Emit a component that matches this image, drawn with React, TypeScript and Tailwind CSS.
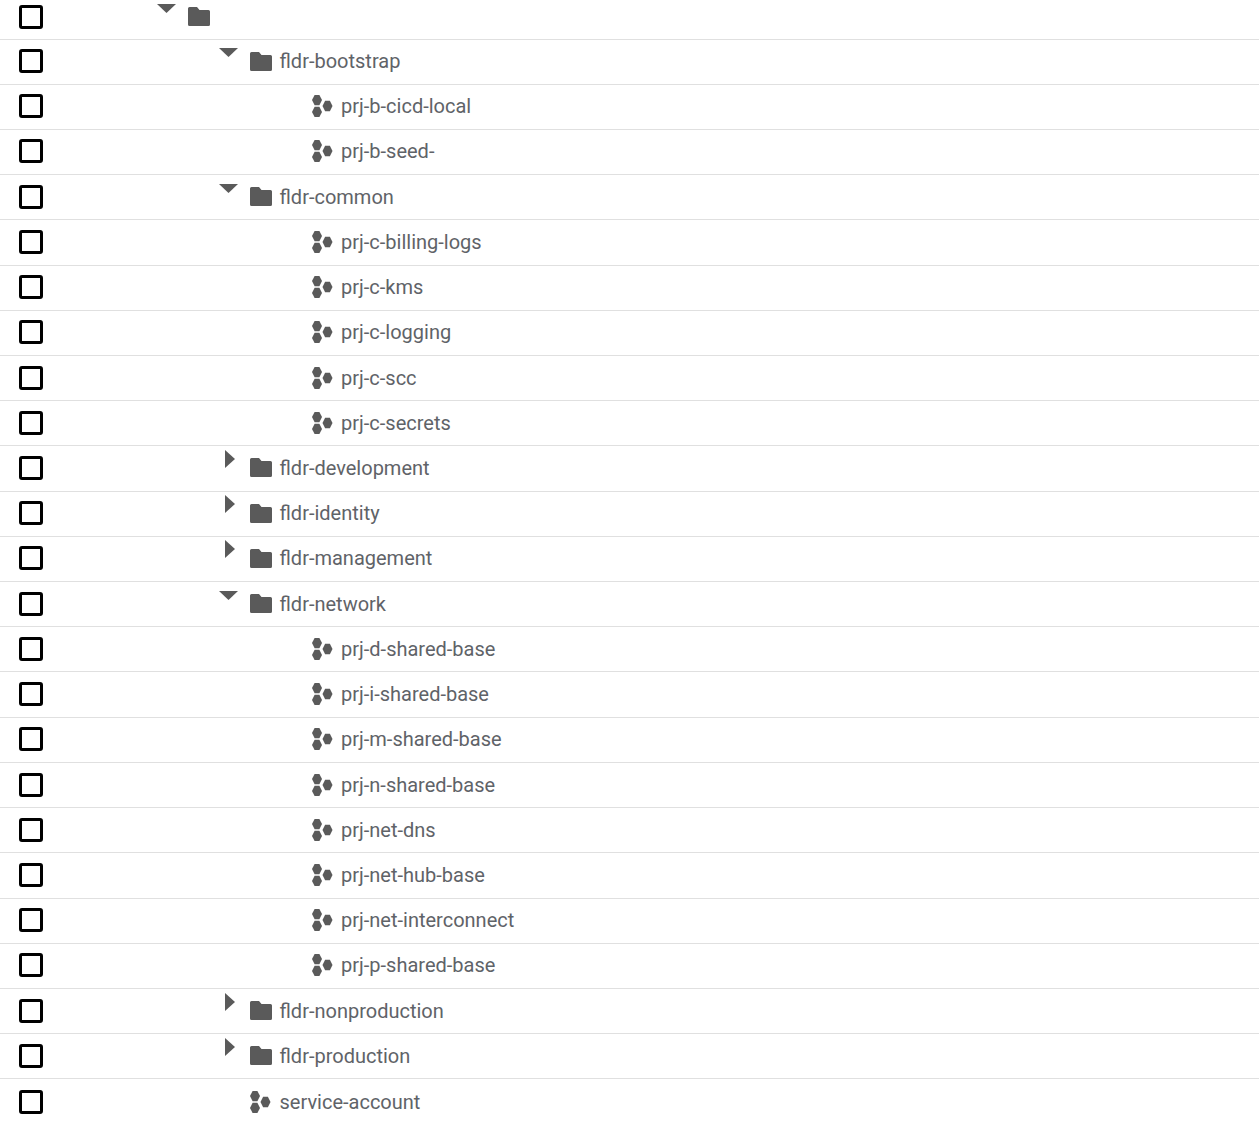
const rows = [
  { kind: 'folder', level: 0, name: '', open: true },
  { kind: 'folder', level: 1, name: 'fldr-bootstrap', open: true },
  { kind: 'project', level: 2, name: 'prj-b-cicd-local' },
  { kind: 'project', level: 2, name: 'prj-b-seed-' },
  { kind: 'folder', level: 1, name: 'fldr-common', open: true },
  { kind: 'project', level: 2, name: 'prj-c-billing-logs' },
  { kind: 'project', level: 2, name: 'prj-c-kms' },
  { kind: 'project', level: 2, name: 'prj-c-logging' },
  { kind: 'project', level: 2, name: 'prj-c-scc' },
  { kind: 'project', level: 2, name: 'prj-c-secrets' },
  { kind: 'folder', level: 1, name: 'fldr-development', open: false },
  { kind: 'folder', level: 1, name: 'fldr-identity', open: false },
  { kind: 'folder', level: 1, name: 'fldr-management', open: false },
  { kind: 'folder', level: 1, name: 'fldr-network', open: true },
  { kind: 'project', level: 2, name: 'prj-d-shared-base' },
  { kind: 'project', level: 2, name: 'prj-i-shared-base' },
  { kind: 'project', level: 2, name: 'prj-m-shared-base' },
  { kind: 'project', level: 2, name: 'prj-n-shared-base' },
  { kind: 'project', level: 2, name: 'prj-net-dns' },
  { kind: 'project', level: 2, name: 'prj-net-hub-base' },
  { kind: 'project', level: 2, name: 'prj-net-interconnect' },
  { kind: 'project', level: 2, name: 'prj-p-shared-base' },
  { kind: 'folder', level: 1, name: 'fldr-nonproduction', open: false },
  { kind: 'folder', level: 1, name: 'fldr-production', open: false },
  { kind: 'project', level: 1, name: 'service-account' },
];

const FolderIcon = () => (
  <svg width="22" height="19" viewBox="0 0 22 19" className="shrink-0 text-[#5a5a5a]">
    <path
      fill="currentColor"
      d="M1.5 0H9l2.5 3H20.5A1.5 1.5 0 0 1 22 4.5V17.5A1.5 1.5 0 0 1 20.5 19H1.5A1.5 1.5 0 0 1 0 17.5V1.5A1.5 1.5 0 0 1 1.5 0Z"
    />
  </svg>
);

const ProjectIcon = () => (
  <svg width="21" height="22" viewBox="0 0 21 22" className="shrink-0 text-[#5a5a5a]">
    <path fill="currentColor" d="M2.6 0H7.4L10 5.1L7.4 10.2H2.6L0 5.1Z" />
    <path fill="currentColor" d="M2.6 11.8H7.4L10 16.9L7.4 22H2.6L0 16.9Z" />
    <path fill="currentColor" d="M13.1 5.8H17.9L20.5 11L17.9 16.2H13.1L10.5 11Z" />
  </svg>
);

const Arrow = ({ open }: { open?: boolean }) =>
  open ? (
    <svg width="19" height="9" viewBox="0 0 19 9" className="mb-[17px] -ml-[1px] text-[#5a5a5a]">
      <path fill="currentColor" d="M0 0H19L9.5 9Z" />
    </svg>
  ) : (
    <svg width="10" height="18" viewBox="0 0 10 18" className="mb-[18px] ml-[5px] mr-[3px] text-[#5a5a5a]">
      <path fill="currentColor" d="M0 0L10 9L0 18Z" />
    </svg>
  );

const indent = ['w-[115px]', 'w-[177px]', 'w-[269px]'];

const App = () => {
  return (
    <div className="w-[1259px] h-[1124px] overflow-hidden bg-white font-['Roboto',sans-serif]">
      {rows.map((row, i) => (
        <div
          key={i}
          className={`flex items-center border-b border-[#e0e0e0] last:border-b-0 ${
            i === 0 ? 'h-[40px] pb-[6px]' : i === 1 ? 'h-[44.64px] pb-[1px]' : 'h-[45.22px] pb-[1px]'
          }`}
        >
          <div className="ml-[19px] h-[24px] w-[24px] shrink-0 rounded-[3px] border-[3px] border-black" />
          <div className={`shrink-0 ${indent[row.level]}`} />
          {row.kind === 'folder' ? (
            <>
              <div className="flex w-[30px] shrink-0">
                <Arrow open={row.open} />
              </div>
              <FolderIcon />
              <span className="ml-[8px] -translate-x-[0.5px] text-[20px] text-[#5f6368]">{row.name}</span>
            </>
          ) : (
            <>
              <div className={row.level === 1 ? 'w-[30px] shrink-0' : 'w-0'} />
              <ProjectIcon />
              <span className={`text-[20px] text-[#5f6368] ${row.level === 1 ? 'ml-[8.5px]' : 'ml-[8px]'}`}>{row.name}</span>
            </>
          )}
        </div>
      ))}
    </div>
  );
};

export default App;
